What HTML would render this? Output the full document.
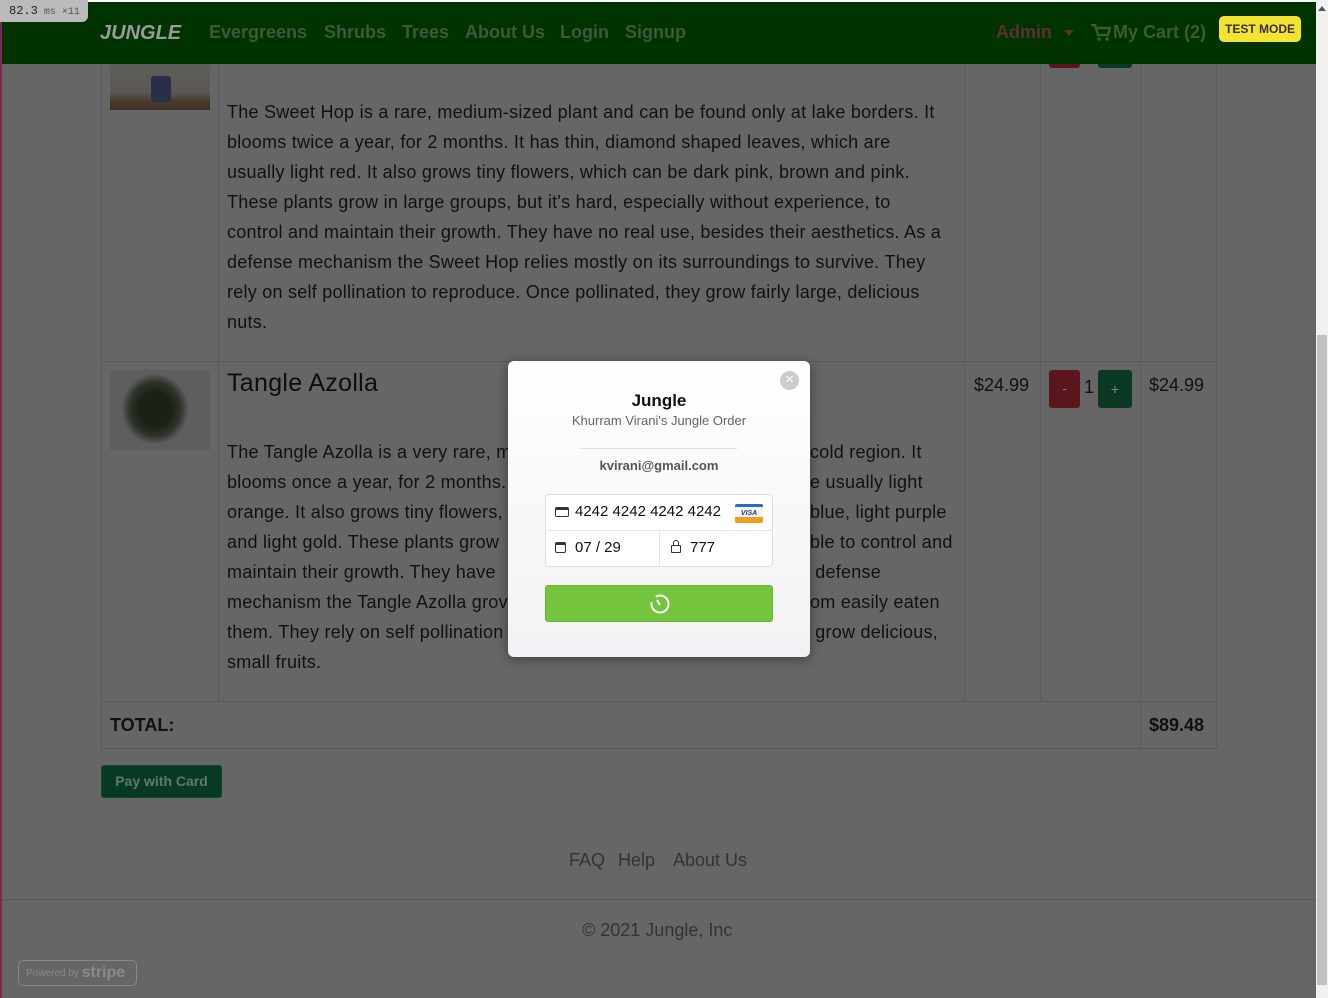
<!DOCTYPE html>
<html><head><meta charset="utf-8"><style>
*{box-sizing:border-box;margin:0;padding:0}
body{width:1328px;height:998px;overflow:hidden;background:#666;font-family:"Liberation Sans",sans-serif;position:relative}
.abs{position:absolute}
.nav{left:2px;top:2px;width:1314px;height:62px;background:#003300}
.nav span{position:absolute;top:20px;font-weight:bold;font-size:19px;color:#3a5a3a;white-space:nowrap}
.cell{position:absolute;border:1px solid #5a5a5a}
.txt{position:absolute;font-size:18px;line-height:30px;color:#111;white-space:nowrap;letter-spacing:0.25px}
.pr{font-size:18px;color:#111}
</style></head><body>
<div class="abs" style="left:0;top:0;width:1316px;height:2px;background:#fff"></div>
<div class="abs" style="left:0;top:0;width:2px;height:998px;background:#7a2a55"></div>
<div class="abs" style="left:1316px;top:0;width:12px;height:998px;background:#f1f1f1"></div>
<div class="abs" style="left:1317px;top:335px;width:10px;height:650px;background:#c1c1c1"></div>
<div class="abs" style="left:1318px;top:6px;width:0;height:0;border-left:4px solid transparent;border-right:4px solid transparent;border-bottom:5px solid #555"></div>

<!-- table -->
<div class="cell" style="left:101px;top:40px;width:118px;height:322px"></div>
<div class="cell" style="left:218px;top:40px;width:747px;height:322px"></div>
<div class="cell" style="left:964px;top:40px;width:77px;height:322px"></div>
<div class="cell" style="left:1040px;top:40px;width:101px;height:322px"></div>
<div class="cell" style="left:1140px;top:40px;width:77px;height:322px"></div>
<div class="cell" style="left:101px;top:361px;width:118px;height:341px"></div>
<div class="cell" style="left:218px;top:361px;width:747px;height:341px"></div>
<div class="cell" style="left:964px;top:361px;width:77px;height:341px"></div>
<div class="cell" style="left:1040px;top:361px;width:101px;height:341px"></div>
<div class="cell" style="left:1140px;top:361px;width:77px;height:341px"></div>
<div class="cell" style="left:101px;top:701px;width:1040px;height:48px"></div>
<div class="cell" style="left:1140px;top:701px;width:77px;height:48px"></div>

<div class="abs" style="left:110px;top:50px;width:100px;height:60px;background:linear-gradient(#5f5f5d 0,#5a5955 70%,#4a3c2c 85%,#3c3028 100%)"></div>
<div class="abs" style="left:151px;top:76px;width:20px;height:26px;background:#2a2f48;border-radius:3px"></div>
<div class="abs" style="left:110px;top:370px;width:100px;height:80px;background:#5e5e5e"></div>
<div class="abs" style="left:122px;top:374px;width:66px;height:70px;background:radial-gradient(ellipse at center,#1a2216 35%,#2f342c 55%,#5e5e5e 72%)"></div>

<div class="txt" style="left:227px;top:97px">The Sweet Hop is a rare, medium-sized plant and can be found only at lake borders. It<br>blooms twice a year, for 2 months. It has thin, diamond shaped leaves, which are<br>usually light red. It also grows tiny flowers, which can be dark pink, brown and pink.<br>These plants grow in large groups, but it's hard, especially without experience, to<br>control and maintain their growth. They have no real use, besides their aesthetics. As a<br>defense mechanism the Sweet Hop relies mostly on its surroundings to survive. They<br>rely on self pollination to reproduce. Once pollinated, they grow fairly large, delicious<br>nuts.</div>
<div class="txt" style="left:227px;top:368px;font-size:25px;letter-spacing:0.3px;color:#0d0d0d">Tangle Azolla</div>
<div class="txt" style="left:227px;top:437px">The Tangle Azolla is a very rare, m<br>blooms once a year, for 2 months.<br>orange. It also grows tiny flowers,<br>and light gold. These plants grow<br>maintain their growth. They have<br>mechanism the Tangle Azolla grov<br>them. They rely on self pollination<br>small fruits.</div>
<div class="txt" style="left:810px;top:437px">cold region. It<br>e usually light<br>blue, light purple<br>ble to control and<br>&nbsp;defense<br>om easily eaten<br>&nbsp;grow delicious,</div>

<div class="abs pr" style="left:974px;top:375px">$24.99</div>
<div class="abs pr" style="left:1149px;top:375px">$24.99</div>
<div class="abs" style="left:1049px;top:370px;width:31px;height:38px;background:#5a161c;border-radius:3px;color:#888;font-size:13px;text-align:center;line-height:38px">-</div>
<div class="abs pr" style="left:1084px;top:377px">1</div>
<div class="abs" style="left:1098px;top:370px;width:34px;height:38px;background:#0b3822;border-radius:3px;color:#888;font-size:14px;text-align:center;line-height:38px">+</div>
<div class="abs" style="left:1049px;top:56px;width:31px;height:12px;background:#5a161c;border-radius:0 0 3px 3px"></div>
<div class="abs" style="left:1098px;top:56px;width:34px;height:12px;background:#0b3822;border-radius:0 0 3px 3px"></div>

<div class="abs" style="left:110px;top:715px;font-size:18px;font-weight:bold;color:#111">TOTAL:</div>
<div class="abs" style="left:1149px;top:715px;font-size:18px;font-weight:bold;color:#111">$89.48</div>
<div class="abs" style="left:101px;top:765px;width:121px;height:33px;background:#063a22;border:1px solid #0f4a2c;border-radius:3px;color:#5f7a6a;font-weight:bold;font-size:14px;text-align:center;line-height:31px">Pay with Card</div>

<div class="abs" style="left:569px;top:850px;font-size:18px;color:#333">FAQ</div>
<div class="abs" style="left:618px;top:850px;font-size:18px;color:#333">Help</div>
<div class="abs" style="left:673px;top:850px;font-size:18px;color:#333">About Us</div>
<div class="abs" style="left:2px;top:899px;width:1314px;height:1px;background:#5a5a5a"></div>
<div class="abs" style="left:582px;top:920px;font-size:18px;color:#333">© 2021 Jungle, Inc</div>
<div class="abs" style="left:18px;top:960px;width:119px;height:26px;border:1px solid #888;border-radius:5px;color:#8a8a8a;font-size:10px;line-height:24px;padding-left:7px;white-space:nowrap">Powered by <b style="font-size:16px;vertical-align:-1px">stripe</b></div>

<!-- nav -->
<div class="abs nav">
<span style="left:98px;color:#9a9a9a;font-style:italic;font-weight:900;font-size:20px">JUNGLE</span>
<span style="left:207px;font-size:18px">Evergreens</span>
<span style="left:322px;font-size:18px">Shrubs</span>
<span style="left:400px;font-size:18px">Trees</span>
<span style="left:463px;font-size:18px">About Us</span>
<span style="left:558px;font-size:18px">Login</span>
<span style="left:623px;font-size:18px">Signup</span>
<span style="left:994px;color:#5a3030;font-size:18px">Admin</span>
<div style="position:absolute;left:1062px;top:28px;border-left:5px solid transparent;border-right:5px solid transparent;border-top:6px solid #5a3030"></div>
<svg style="position:absolute;left:1089px;top:22px" width="20" height="18" viewBox="0 0 20 18"><path d="M0 1h4l3 10h10l2-7H5" fill="none" stroke="#3a5a3a" stroke-width="2.5"/><circle cx="8" cy="15" r="1.8" fill="#3a5a3a"/><circle cx="16" cy="15" r="1.8" fill="#3a5a3a"/></svg>
<span style="left:1111px;font-size:18px">My Cart (2)</span>
</div>
<div class="abs" style="left:1219px;top:16px;width:82px;height:26px;background:#f5e332;border-radius:5px;font-size:12px;font-weight:bold;color:#333;text-align:center;line-height:26px">TEST MODE</div>
<div class="abs" style="left:0;top:0;width:88px;height:22px;background:#bbb;border-radius:0 0 6px 0;font-family:'Liberation Mono',monospace;font-size:12px;color:#222;padding:4px 0 0 9px">82.3<span style="font-size:10px;color:#555"> ms ×11</span></div>

<!-- modal -->
<div class="abs" style="left:508px;top:361px;width:302px;height:296px;background:linear-gradient(#fff,#f2f2f5);border-radius:6px;box-shadow:0 2px 12px rgba(0,0,0,.4)">
<div class="abs" style="left:272px;top:10px;width:19px;height:19px;border-radius:50%;background:#ccc;color:#fff;font-size:15px;text-align:center;line-height:18px">×</div>
<div class="abs" style="left:0;top:30px;width:302px;text-align:center;font-weight:bold;font-size:17px;color:#111">Jungle</div>
<div class="abs" style="left:0;top:52px;width:302px;text-align:center;font-size:13px;color:#666">Khurram Virani's Jungle Order</div>
<div class="abs" style="left:73px;top:87px;width:156px;height:1px;background:#e2e2e2"></div>
<div class="abs" style="left:0;top:97px;width:302px;text-align:center;font-size:13px;font-weight:bold;color:#555">kvirani@gmail.com</div>
<div class="abs" style="left:37px;top:133px;width:228px;height:73px;background:#fff;border:1px solid #ddd;border-radius:4px">
<div class="abs" style="left:0;top:35px;width:226px;height:1px;background:#e5e5e5"></div>
<div class="abs" style="left:113px;top:35px;width:1px;height:36px;background:#e5e5e5"></div>
<div class="abs" style="left:9px;top:12px;width:14px;height:10px;border:1.5px solid #333;border-radius:2px;border-top-width:3px"></div>
<div class="abs" style="left:29px;top:8px;font-size:15px;color:#111">4242 4242 4242 4242</div>
<div class="abs" style="left:189px;top:9px;width:28px;height:19px;border-radius:2px;background:linear-gradient(#2a6cc4 0 3px,#f5f5f5 3px 13px,#f0a020 13px);font-size:7px;font-weight:bold;font-style:italic;color:#1a3a8a;text-align:center;line-height:19px">VISA</div>
<div class="abs" style="left:9px;top:47px;width:11px;height:11px;border:1.5px solid #333;border-radius:2px;border-top-width:3px"></div>
<div class="abs" style="left:29px;top:44px;font-size:15px;color:#111">07 / 29</div>
<div class="abs" style="left:125px;top:50px;width:10px;height:8px;border:1.5px solid #333;border-radius:1px"></div>
<div class="abs" style="left:127px;top:45px;width:6px;height:6px;border:1.5px solid #333;border-bottom:none;border-radius:3px 3px 0 0"></div>
<div class="abs" style="left:144px;top:44px;font-size:15px;color:#111">777</div>
</div>
<div class="abs" style="left:37px;top:224px;width:228px;height:37px;background:#75c43e;border:1px solid #6ab536;border-radius:3px">
<svg class="abs" style="left:103px;top:7px" width="22" height="22" viewBox="0 0 22 22"><circle cx="11" cy="11" r="8.5" fill="none" stroke="#fff" stroke-width="2" stroke-dasharray="46 8" transform="rotate(-120 11 11)"/><line x1="8" y1="7" x2="11" y2="12" stroke="#fff" stroke-width="2"/></svg>
</div>
</div>
</body></html>
